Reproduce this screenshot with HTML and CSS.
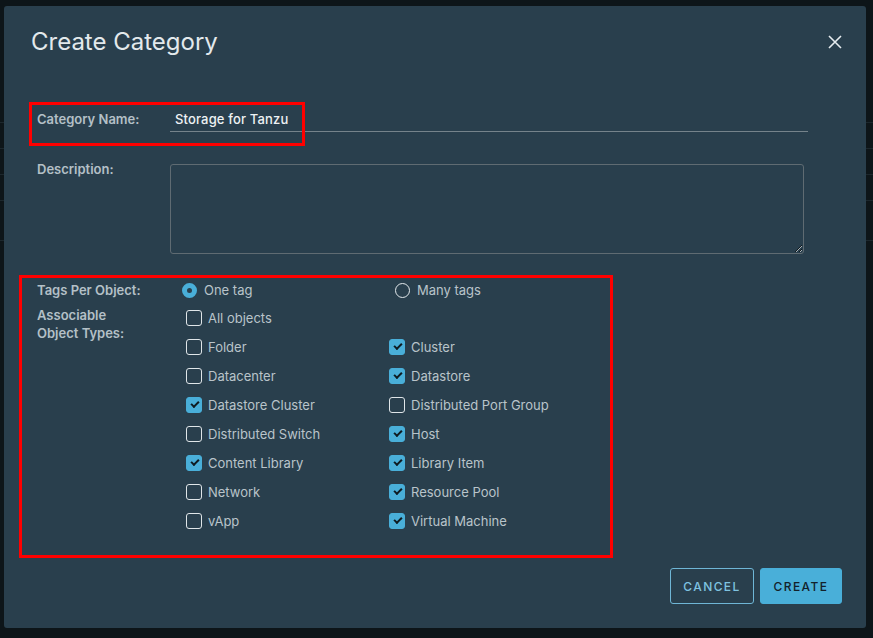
FILE: index.html
```html
<!DOCTYPE html>
<html>
<head>
<meta charset="utf-8">
<link rel="stylesheet" href="styles.css">
</head>
<body>
<div class="backdrop">
  <div class="modal">
    <div class="modal-header">
      <h1 class="title">Create Category</h1>
      <button class="close" aria-label="Close">
        <svg width="14" height="14" viewBox="0 0 14 14"><path d="M1 1 L13 13 M13 1 L1 13" stroke="#e6ecef" stroke-width="1.6" fill="none"/></svg>
      </button>
    </div>
    <form class="form">
      <div class="row row-name">
        <label class="label">Category Name:</label>
        <div class="input">Storage for Tanzu</div>
      </div>
      <div class="row row-desc">
        <label class="label">Description:</label>
        <textarea class="textarea"></textarea>
      </div>
      <div class="row row-tags">
        <label class="label">Tags Per Object:</label>
        <div class="radios">
          <span class="radio-item"><span class="radio checked"></span>One tag</span>
          <span class="radio-item second"><span class="radio"></span>Many tags</span>
        </div>
      </div>
      <div class="row row-types">
        <label class="label label-types">Associable<br>Object Types:</label>
        <div class="checks">
          <span class="check-item"><span class="box"></span>All objects</span>
          <span class="check-item"></span>
          <span class="check-item"><span class="box"></span>Folder</span>
          <span class="check-item"><span class="box on"></span>Cluster</span>
          <span class="check-item"><span class="box"></span>Datacenter</span>
          <span class="check-item"><span class="box on"></span>Datastore</span>
          <span class="check-item"><span class="box on"></span>Datastore Cluster</span>
          <span class="check-item"><span class="box"></span>Distributed Port Group</span>
          <span class="check-item"><span class="box"></span>Distributed Switch</span>
          <span class="check-item"><span class="box on"></span>Host</span>
          <span class="check-item"><span class="box on"></span>Content Library</span>
          <span class="check-item"><span class="box on"></span>Library Item</span>
          <span class="check-item"><span class="box"></span>Network</span>
          <span class="check-item"><span class="box on"></span>Resource Pool</span>
          <span class="check-item"><span class="box"></span>vApp</span>
          <span class="check-item"><span class="box on"></span>Virtual Machine</span>
        </div>
      </div>
    </form>
    <div class="footer">
      <button class="btn btn-outline">CANCEL</button>
      <button class="btn btn-primary">CREATE</button>
    </div>
    <div class="mark mark-name"></div>
    <div class="mark mark-tags"></div>
  </div>
</div>
</body>
</html>
```

FILE: styles.css
```css
* { box-sizing: border-box; }
html, body { margin: 0; padding: 0; }
body {
  width: 873px;
  height: 638px;
  overflow: hidden;
  font-family: "Inter", "Open Sans", "Liberation Sans", sans-serif;
  background-color: #0d1519;
  background-image:
    linear-gradient(#1c272d, #1c272d),
    linear-gradient(#1c272d, #1c272d),
    linear-gradient(#1c272d, #1c272d),
    linear-gradient(#1c272d, #1c272d),
    linear-gradient(#1c272d, #1c272d);
  background-size: 100% 1px;
  background-repeat: no-repeat;
  background-position: 0 122px, 0 148px, 0 174px, 0 200px, 0 240px;
}
.backdrop {
  padding: 6px 7px 10px 4px;
}
.modal {
  position: relative;
  width: 862px;
  height: 622px;
  background: #293f4d;
  border-radius: 3px;
  display: flex;
  flex-direction: column;
  padding: 20px 24px 24px 27px;
}
.modal-header {
  display: flex;
  justify-content: space-between;
  align-items: center;
  height: 32px;
}
.title {
  margin: 0;
  font-weight: 400;
  font-size: 24px;
  line-height: 32px;
  color: #e3e9ec;
  letter-spacing: 0;
}
.close {
  background: none;
  border: 0;
  padding: 0;
  width: 14px;
  height: 14px;
  display: block;
}
.close svg { display: block; }
.form {
  padding-left: 6px;
  margin-top: 48px;
}
.row {
  display: flex;
  align-items: flex-start;
}
.label {
  width: 133px;
  flex: none;
  font-size: 13px;
  font-weight: 600;
  line-height: 18px;
  color: #b4c0c7;
}
.row-name { height: 26px; align-items: center; }
.input {
  width: 638px;
  height: 26px;
  border-bottom: 1px solid #75838b;
  font-size: 13px;
  font-weight: 500;
  line-height: 26px;
  color: #eef2f4;
  padding-left: 5px;
  letter-spacing: 0.15px;
}
.row-desc { margin-top: 28px; }
.textarea {
  margin-top: 4px;
  width: 634px;
  height: 90px;
  background: transparent;
  border: 1px solid #5f6b72;
  border-radius: 3px;
  resize: vertical;
  color: #eef2f4;
}
.row-tags { margin-top: 27px; }
.radios { display: flex; }
.radio-item {
  display: flex;
  align-items: center;
  font-size: 13px;
  line-height: 18px;
  color: #b9c4ca;
  margin-left: 12px;
  width: 213px;
}
.radio-item.second { margin-left: 0; }
.radio {
  width: 15px;
  height: 15px;
  border-radius: 50%;
  border: 1px solid #e3e9ec;
  margin-right: 7px;
  flex: none;
}
.radio.checked {
  border: 5px solid #49afd9;
  background: #293f4d;
}
.row-types { margin-top: 4px; }
.label-types { padding-top: 3px; }
.checks {
  display: grid;
  grid-template-columns: 203px 203px;
  grid-auto-rows: 29px;
  margin-left: 16px;
}
.check-item {
  display: flex;
  align-items: center;
  font-size: 13px;
  color: #b9c4ca;
}
.box {
  width: 16px;
  height: 16px;
  border: 1px solid #dfe5e8;
  border-radius: 3px;
  margin-right: 6px;
  flex: none;
  position: relative;
}
.box.on {
  background: #49afd9;
  border-color: #49afd9;
}
.box.on::after {
  content: "";
  position: absolute;
  left: 4px;
  top: 3px;
  width: 6px;
  height: 3px;
  border-left: 2px solid #0f1b21;
  border-bottom: 2px solid #0f1b21;
  transform: rotate(-45deg);
}
.footer {
  margin-top: auto;
  display: flex;
  justify-content: flex-end;
  gap: 6px;
}
.btn {
  height: 36px;
  border-radius: 3px;
  font-family: "Inter", "Open Sans", "Liberation Sans", sans-serif;
  font-size: 12px;
  font-weight: 500;
  letter-spacing: 1.4px;
  padding: 0;
}
.btn-outline {
  width: 84px;
  background: transparent;
  border: 1px solid #6fb6d6;
  color: #7fc3e0;
}
.btn-primary {
  width: 82px;
  background: #49afd9;
  border: 1px solid #49afd9;
  color: #13212a;
}
.mark {
  position: absolute;
  border: 3px solid #ff0000;
  pointer-events: none;
}
.mark-name { left: 25px; top: 96px; width: 276px; height: 44px; }
.mark-tags { left: 15px; top: 269px; width: 594px; height: 283px; }
```
